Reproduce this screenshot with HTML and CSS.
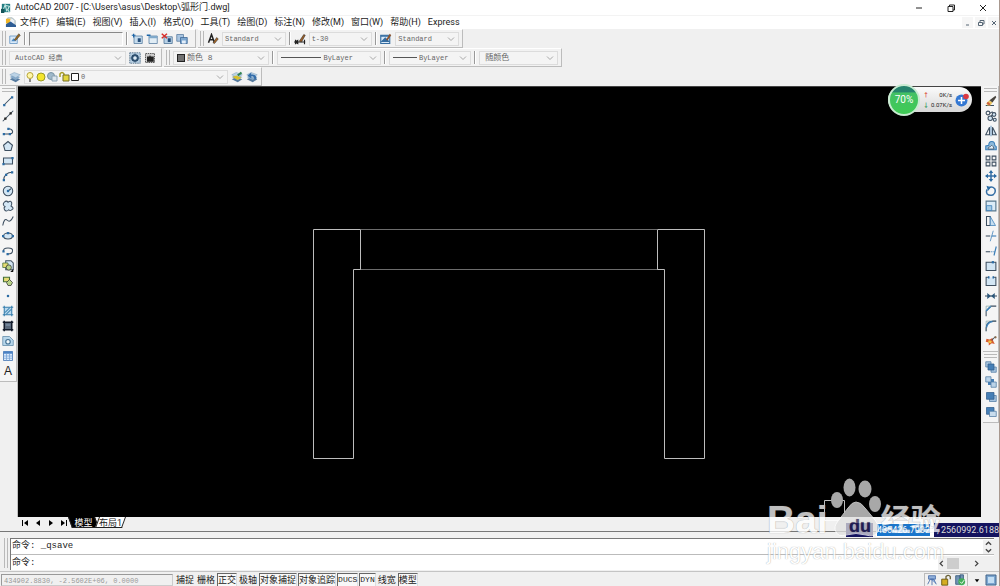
FILE: index.html
```html
<!DOCTYPE html>
<html lang="zh-CN">
<head>
<meta charset="utf-8">
<title>AutoCAD 2007</title>
<link rel="stylesheet" href="styles.css">
</head>
<body>
<svg class="defs" aria-hidden="true">
  <symbol id="chev" viewBox="0 0 8 8"><path d="M1 2.5 4 5.5 7 2.5" fill="none" stroke="#a8a8a8"/></symbol>
  <symbol id="layers" viewBox="0 0 16 16"><path d="M1 11 7 8l8 3-6 4z" fill="#557a9e"/><path d="M1 8 7 5l8 3-6 4z" fill="#86a9c9"/><path d="M1 5 7 2l8 3-6 4z" fill="#bcd3e6" stroke="#7697b5" stroke-width=".6"/></symbol>
</svg>
<div class="app">
  <header class="titlebar">
    <svg class="logo" viewBox="0 0 12 12"><path d="M1 1h10v10H1z" fill="#247e83"/><path d="M2 10 5 2l2 8M6 3l4 1-2 4 2 3" fill="none" stroke="#c8e9e4" stroke-width="1.3"/><path d="M0 7h4v5H0z" fill="#175659"/></svg>
    <h1 class="title">AutoCAD 2007 - [C:\Users\asus\Desktop\弧形门.dwg]</h1>
    <div class="wincontrols">
      <button aria-label="最小化"><svg viewBox="0 0 10 10"><path d="M2 5h6" /></svg></button>
      <button aria-label="还原"><svg viewBox="0 0 10 10"><path d="M2 3.5h5v5H2zM3.5 3.500V2H8.500v5H7"/></svg></button>
      <button aria-label="关闭"><svg viewBox="0 0 10 10"><path d="M2 2l6 6M8 2l-6 6"/></svg></button>
    </div>
  </header>
  <nav class="menubar">
    <svg class="docicon" viewBox="0 0 12 12"><path d="M3 1h5l3 3v6H3z" fill="#e9eff6" stroke="#9aa"/><path d="M1 2h5l-1 5H1z" fill="#f0b526"/><path d="M1 8l5-3 6 4v2H1z" fill="#2e5d95"/></svg>
    <button>文件(F)</button><button>编辑(E)</button><button>视图(V)</button><button>插入(I)</button><button>格式(O)</button><button>工具(T)</button><button>绘图(D)</button><button>标注(N)</button><button>修改(M)</button><button>窗口(W)</button><button>帮助(H)</button><button>Express</button>
    <div class="doccontrols">
      <button aria-label="最小化文档"><svg viewBox="0 0 8 8"><path d="M2 6h3"/></svg></button>
      <button aria-label="还原文档"><svg viewBox="0 0 8 8"><path d="M3 3V1.500h4V5H5.500M1.500 3.500h4v3h-4z"/></svg></button>
      <button aria-label="关闭文档"><svg viewBox="0 0 8 8"><path d="M2 2l4 4M6 2 2 6"/></svg></button>
    </div>
  </nav>
  <div class="row">
    <div class="bar barstd">
      <i class="grip"></i>
      <button class="tool" aria-label="编辑块"><svg viewBox="0 0 16 16"><path d="M1 4h10v10H1z" fill="#d9e9f8" stroke="#5a8dbd"/><path d="M3 11 6 7l3 4z" fill="#4c8bc4"/><path d="m7 9 6-8 2 2-6 7z" fill="#9a6a20" stroke="#333" stroke-width=".7"/></svg></button>
      <i class="sep"></i>
      <input class="blockname" type="text" aria-label="参照名称">
      <i class="sep"></i>
      <button class="tool" aria-label="添加到工作集"><svg viewBox="0 0 16 16"><path d="M4 4h11v10H4z" fill="#c6dced" stroke="#51789d"/><path d="M9 7h4v5H9z" fill="#264f7b"/><path d="M1 3h5M3.500 1v5" stroke="#1b64a6" stroke-width="1.600"/></svg></button>
      <button class="tool" aria-label="从工作集删除"><svg viewBox="0 0 16 16"><path d="M4 4h11v10H4z" fill="#e1edf5" stroke="#51789d"/><path d="M4 4h11v3H4z" fill="#80a9ca"/><path d="M1 3h5" stroke="#1b64a6" stroke-width="2"/></svg></button>
      <button class="tool" aria-label="放弃修改"><svg viewBox="0 0 16 16"><path d="M4 5h11v9H4z" fill="#b8d1e6" stroke="#456d93"/><path d="M9 7h4v5H9z" fill="#264f7b"/><path d="m1 1 7 6M8 1 1 7" stroke="#d92d28" stroke-width="2"/></svg></button>
      <button class="tool" aria-label="保存修改"><svg viewBox="0 0 16 16"><path d="M1 2h9v9H1z" fill="#a9c5e1" stroke="#55799d"/><path d="M6 6h9v8H6z" fill="#7da7d0" stroke="#386493"/><path d="M8 10h5v4H8z" fill="#e3eefa"/></svg></button>
    </div>
    <div class="bar barstyle">
      <i class="grip"></i>
      <button class="tool" aria-label="文字样式"><svg viewBox="0 0 16 16"><path d="m2 13 4-11 4 11M3 9h6" fill="none" stroke="#222" stroke-width="2"/><path d="m8 13 5-7 2 2-5 6z" fill="#ab6b2a" stroke="#222" stroke-width=".7"/></svg></button>
      <label class="combo grow"><select aria-label="文字样式"><option>Standard</option></select><svg><use href="#chev"/></svg></label>
      <i class="sep"></i>
      <button class="tool" aria-label="标注样式"><svg viewBox="0 0 16 16"><path d="M1 12h14M2 9v6M14 9v6M1 12l4-2v4z" stroke="#222" stroke-width="1.500"/><path d="m7 11 6-9 2 1-5 9z" fill="#9b5e27" stroke="#222" stroke-width=".7"/></svg></button>
      <label class="combo grow"><select aria-label="标注样式"><option>t-30</option></select><svg><use href="#chev"/></svg></label>
      <i class="sep"></i>
      <button class="tool" aria-label="表格样式"><svg viewBox="0 0 16 16"><path d="M1 3h12v11H1z" fill="#d9e9f8" stroke="#356da1" stroke-width="1.500"/><path d="M1 4h12M3 11l4-4 4 4z" stroke="#356da1" stroke-width="2" fill="#356da1"/><path d="m8 9 5-8 2 2-5 7z" fill="#8d532c"/></svg></button>
      <label class="combo grow"><select aria-label="表格样式"><option>Standard</option></select><svg><use href="#chev"/></svg></label>
    </div>
  </div>
  <div class="row">
    <div class="bar barws">
      <i class="grip"></i>
      <label class="combo grow"><select aria-label="工作空间"><option>AutoCAD 经典</option></select><svg><use href="#chev"/></svg></label>
      <button class="tool" aria-label="工作空间设置"><svg viewBox="0 0 16 16"><path d="M1 1h14v14H1z" fill="#b8cfe2" stroke="#42617b" stroke-dasharray="2 1"/><circle cx="8" cy="8" r="4" fill="none" stroke="#294b6b" stroke-width="2"/><path d="M8 2v12M2 8h12M4 4l8 8M12 4l-8 8" stroke="#294b6b"/><circle cx="8" cy="8" r="2" fill="#dce9f2"/></svg></button>
      <button class="tool" aria-label="我的工作空间"><svg viewBox="0 0 16 16"><path d="M2 2h12v12H2z" fill="#ccc" stroke="#333" stroke-dasharray="2 1"/><path d="M4 6h3l1-2 1 2h4v7H4z" fill="#222"/></svg></button>
    </div>
    <div class="bar barprops">
      <i class="grip"></i>
      <label class="combo w100"><i class="swatch"></i><select aria-label="颜色"><option>颜色 8</option></select><svg><use href="#chev"/></svg></label>
      <i class="sep"></i>
      <label class="combo w108"><i class="sample long"></i><select aria-label="线型"><option>ByLayer</option></select><svg><use href="#chev"/></svg></label>
      <i class="sep"></i>
      <label class="combo w84"><i class="sample"></i><select aria-label="线宽"><option>ByLayer</option></select><svg><use href="#chev"/></svg></label>
      <i class="sep"></i>
      <label class="combo w80"><select aria-label="打印样式"><option>随颜色</option></select><svg><use href="#chev"/></svg></label>
    </div>
  </div>
  <div class="row">
    <div class="bar barlayer">
      <i class="grip"></i>
      <button class="tool" aria-label="图层特性管理器"><svg><use href="#layers"/></svg></button>
      <label class="combo grow layercombo">
        <svg class="state" viewBox="0 0 54 12"><circle cx="5" cy="4.500" r="3" fill="#fff6a8" stroke="#b7a437"/><path d="M4 8h2v3H4z" fill="#888"/><circle cx="16" cy="6" r="4" fill="#f4e52d" stroke="#9a9a26"/><circle cx="26" cy="5" r="3.500" fill="#9fb9cb" stroke="#7893a5"/><path d="M27 5h5v5h-5z" fill="#dbe6ee" stroke="#8ba2b3"/><path d="M35 6V3q2-3 4 0v3" fill="none" stroke="#a89d28" stroke-width="1.500"/><path d="M38 4h6v6h-6z" fill="#e3d63c" stroke="#766e24"/><path d="M46.500 2.500h7v7h-7z" fill="#fff" stroke="#222"/></svg>
        <select aria-label="图层"><option>0</option></select><svg><use href="#chev"/></svg></label>
      <button class="tool" aria-label="置为当前图层"><svg viewBox="0 0 16 16"><use href="#layers"/><path d="M2 8l5-2 7 3-5 3z" fill="#d8c12c"/><path d="m8 5 5-4 2 2-5 4z" fill="#338352"/></svg></button>
      <button class="tool" aria-label="上一个图层"><svg viewBox="0 0 16 16"><use href="#layers"/><path d="M14 11c0-5-3-7-7-6V2L2 6l5 4V7q4-1 4 4z" fill="#356eaa"/></svg></button>
    </div>
  </div>
  <main class="work">
    <aside class="side left">
      <div class="palette">
      <i class="hgrip"></i>
      <button aria-label="直线"><svg viewBox="0 0 16 16"><path d="M3 13 13 3" class="k"/><path d="M1.500 12h3v3h-3zM12 1.500h3v3h-3z" class="b"/></svg></button>
      <button aria-label="构造线"><svg viewBox="0 0 16 16"><path d="M1 15 15 1" class="k"/><path d="M3 10h3v3H3zM10 3h3v3h-3z" fill="#222"/></svg></button>
      <button aria-label="多段线"><svg viewBox="0 0 16 16"><path d="M2 12h9q4-1 3-4-1-3-5-3" class="k"/><path d="M1 10.500h3v3H1zM9 10.500h3v3H9zM7 3.500h3v3H7z" class="b"/></svg></button>
      <button aria-label="正多边形"><svg viewBox="0 0 16 16"><path d="M8 2l6 5-2 7H4L2 7z" class="k f"/></svg></button>
      <button aria-label="矩形"><svg viewBox="0 0 16 16"><path d="M2 4h12v8H2z" class="k f"/><path d="M.5 10.500h3v3h-3zM12.500 2.500h3v3h-3z" class="b"/></svg></button>
      <button aria-label="圆弧"><svg viewBox="0 0 16 16"><path d="M2 14Q3 3 14 3" class="k"/><path d="M1 12h3v3H1zM4 5h3v3H4zM12 1.500h3v3h-3z" class="b"/></svg></button>
      <button aria-label="圆"><svg viewBox="0 0 16 16"><circle cx="8" cy="8" r="6.300" class="k f"/><path d="M8 8l4-3" class="k"/><path d="M6.500 6.500h3v3h-3z" class="b"/></svg></button>
      <button aria-label="修订云线"><svg viewBox="0 0 16 16"><path d="M4 9Q0 6 3 3q3-3 5 0 4-3 5 1 0 3-1 4 5 3 1 5-2 2-4 0-4 4-6-1-1-2 1-3z" class="k f"/></svg></button>
      <button aria-label="样条曲线"><svg viewBox="0 0 16 16"><path d="M1 14Q3 3 7 7t8-5" class="k"/></svg></button>
      <button aria-label="椭圆"><svg viewBox="0 0 16 16"><ellipse cx="8" cy="8" rx="6" ry="4" class="k f"/><path d="M0 6.500h3v3H0zM13 6.500h3v3h-3zM6.500 2.500h3v3h-3z" class="b"/></svg></button>
      <button aria-label="椭圆弧"><svg viewBox="0 0 16 16"><path d="M2 9Q1 4 8 4t6 4q0 4-6 4" class="k"/><path d="M.5 7h3v3h-3zM6 10.500h3v3H6z" class="b"/></svg></button>
      <button aria-label="插入块"><svg viewBox="0 0 16 16"><path d="M5 1h7l3 3v9H5z" class="k f"/><path d="M1 4h7v6H1z" fill="#e6dc74" stroke="#456f37"/><circle cx="9" cy="10" r="3.500" fill="#b8d388" stroke="#333"/><path d="M15 12v4h-4z" fill="#111"/></svg></button>
      <button aria-label="创建块"><svg viewBox="0 0 16 16"><path d="M2 3h8v6H2z" fill="#e6dc74" stroke="#456f37" stroke-width="1.500"/><path d="M10 6l4 4-2 4H8l-2-4z" fill="#b8d388" stroke="#333"/></svg></button>
      <button aria-label="点"><svg viewBox="0 0 16 16"><path d="M6.500 6.500h3v3h-3z" class="b"/></svg></button>
      <button aria-label="图案填充"><svg viewBox="0 0 16 16"><path d="M3 3h10v10H3z" fill="#b9d9ee"/><path d="M3 1v14M13 1v14M1 3h14M1 13h14M4 10l6-6M6 12l6-6" stroke="#347dac" stroke-width="1.400"/></svg></button>
      <button aria-label="渐变色"><svg viewBox="0 0 16 16"><path d="M3 3h10v10H3z" fill="#59687b"/><path d="M3 1v14M13 1v14M1 3h14M1 13h14" stroke="#121b2b" stroke-width="2"/><path d="M5 5h6v3H5z" fill="#71849a"/></svg></button>
      <button aria-label="面域"><svg viewBox="0 0 16 16"><path d="M1 2h9l5 5v7H1z" fill="#b7d6ea" stroke="#5c87a5"/><circle cx="8" cy="9" r="3" fill="#eef6fa" stroke="#416f92" stroke-width="1.500"/></svg></button>
      <button aria-label="表格"><svg viewBox="0 0 16 16"><path d="M2 2h12v12H2z" fill="#d9eafd" stroke="#386bac"/><path d="M2 2h12v3H2z" fill="#4b82c4"/><path d="M6 5v9M10 5v9M2 8h12M2 11h12" stroke="#76a2d4"/></svg></button>
      <button class="letter">A</button>
      </div>
    </aside>
    <section class="drawing" aria-label="绘图区">
      <svg viewBox="18 87 963 430" preserveAspectRatio="xMidYMin slice">
        <path d="M361 229.500H657M354 269.500H664" stroke="#6c6c6c" fill="none"/>
        <path d="M313.500 229.500H360.500V269.500H353.500V458.500H313.500zM657.500 229.500H704.500V458.500H664.500V269.500H657.500z" stroke="#bdbdbd" fill="none"/>
      </svg>
      <div class="netball">
        <span class="percent">70%</span>
        <span class="rates"><span><b class="up">↑</b>0K/s</span><span><b class="down">↓</b>0.07K/s</span></span>
        <svg class="plus" viewBox="0 0 14 14"><circle cx="6.500" cy="7.500" r="6" fill="#3478d3"/><path d="M6.500 4v7M3 7.500h7" stroke="#fff" stroke-width="1.500"/><circle cx="11" cy="3.500" r="2.800" fill="#dc3941"/></svg>
      </div>
    </section>
    <aside class="side right">
      <div class="palette">
      <i class="hgrip"></i>
      <button aria-label="删除"><svg viewBox="0 0 16 16"><path d="M1 14h11" class="k"/><path d="m2 11 4-4 4 3-3 4H3z" fill="#e8c35e"/><path d="m6 7 8-6 1 2-5 7z" fill="#48443e"/><path d="M2 11l2-2 3 3-1 2z" fill="#c7583e"/></svg></button>
      <button aria-label="复制"><svg viewBox="0 0 16 16"><circle cx="4" cy="4" r="2.500" class="k"/><path d="M6 5q5-5 5 1L7 9" class="k"/><circle cx="12" cy="6" r="2.500" class="k f"/><circle cx="7" cy="11" r="3" class="k f"/><circle cx="13" cy="13" r="2" class="k f"/></svg></button>
      <button aria-label="镜像"><svg viewBox="0 0 16 16"><path d="M6 3v10H1z" class="k"/><path d="M10 3v10h5z" class="k f"/><path d="M8 1v14" stroke="#3474ac"/></svg></button>
      <button aria-label="偏移"><svg viewBox="0 0 16 16"><path d="M1 13V8l4-1q0-5 4-5t4 5l2 2v4z" fill="#8db8d9" stroke="#397eb8" stroke-width="1.400"/><path d="M4 12q0-3 3-3 2-4 4 0l1 3z" fill="#e5f1fb" stroke="#3e4f60"/></svg></button>
      <button aria-label="阵列"><svg viewBox="0 0 16 16"><path d="M1.500 1.500h5v5h-5zM9.500 1.500h5v5h-5zM1.500 9.500h5v5h-5zM9.500 9.500h5v5h-5z" class="k"/></svg></button>
      <button aria-label="移动"><svg viewBox="0 0 16 16"><path d="M8 2v12M2 8h12" stroke="#366fa5" stroke-width="2"/><path d="M8 0l3 4H5zM8 16l3-4H5zM0 8l4-3v6zM16 8l-4-3v6z" class="b"/></svg></button>
      <button aria-label="旋转"><svg viewBox="0 0 16 16"><path d="M5 4q4-3 8 1 2 5-2 8-5 2-8-1-2-3 0-6" fill="none" stroke="#366fa5" stroke-width="2"/><path d="M2 1l6 2-4 5z" class="b"/></svg></button>
      <button aria-label="缩放"><svg viewBox="0 0 16 16"><path d="M1.500 1.500h13v13h-13z" fill="#dcecf8" stroke="#58788e" stroke-width="1.500"/><path d="M2 7.500h7V14H2z" fill="#a6cce6" stroke="#397eb8"/></svg></button>
      <button aria-label="拉伸"><svg viewBox="0 0 16 16"><path d="M2 2h5v12H2z" class="k"/><path d="M7 2l7 12H7z" fill="#c6def0" stroke="#397eb8"/></svg></button>
      <button aria-label="修剪"><svg viewBox="0 0 16 16"><path d="M7 15 11 1" stroke="#397eb8"/><path d="M1 8h6" class="k"/><path d="M9 8h6" stroke="#397eb8" stroke-width="1.500"/></svg></button>
      <button aria-label="延伸"><svg viewBox="0 0 16 16"><path d="M12 14 15 2" stroke="#397eb8" stroke-width="1.500"/><path d="M1 9h6" class="k"/><path d="M8 9h5" stroke="#397eb8" stroke-dasharray="2 1"/></svg></button>
      <button aria-label="打断于点"><svg viewBox="0 0 16 16"><path d="M1.500 3h13v11h-13z" class="k f"/><path d="M9 1.500h3v3H9z" class="b"/></svg></button>
      <button aria-label="打断"><svg viewBox="0 0 16 16"><path d="M5 3H1.500v11h13V3H11" class="k f"/><path d="M4 1.500h2v3H4zM10 1.500h2v3h-2z" class="b"/></svg></button>
      <button aria-label="合并"><svg viewBox="0 0 16 16"><path d="M0 8h16" class="k"/><path d="m3 4 5 4-5 4zM13 4 8 8l5 4z" fill="#2b567a"/></svg></button>
      <button aria-label="倒角"><svg viewBox="0 0 16 16"><path d="M1.500 15V8L8 1.500h7" class="k"/><path d="M1.500 8 8 1.500" stroke="#397eb8" stroke-width="2"/><path d="M1.500 7V1.500H8" stroke="#8aa" fill="none"/></svg></button>
      <button aria-label="圆角"><svg viewBox="0 0 16 16"><path d="M1.500 15V1.500H15" stroke="#8aa" fill="none"/><path d="M1.500 15v-4Q2 2 11 1.500h4" class="k"/><path d="M2 10Q3 3 10 2" stroke="#397eb8" stroke-width="2" fill="none"/></svg></button>
      <button aria-label="分解"><svg viewBox="0 0 16 16"><path d="m2 5 4 1 4-2 1 4 2 4-4-1-4 3v-4L1 9z" fill="#d65c31"/><path d="m5 7 4 1-1 3-4-1z" fill="#f1c447"/><path d="m9 7 5-5" class="k"/><circle cx="14" cy="3" r="1.500" fill="#8c6c49"/></svg></button>
      </div>
      <div class="palette">
      <i class="hgrip"></i>
      <button aria-label="前置"><svg viewBox="0 0 16 16"><path d="M1 1h7v7H1zM8 8h7v7H8z" fill="#a9c5df" stroke="#527ba3"/><path d="M4 4h8v8H4z" fill="#467fb6" stroke="#315e8c"/></svg></button>
      <button aria-label="后置"><svg viewBox="0 0 16 16"><path d="M4 4h8v8H4z" fill="#467fb6"/><path d="M1 1h7v7H1zM8 8h7v7H8z" fill="#bbd3e8" stroke="#527ba3"/></svg></button>
      <button aria-label="置于对象之上"><svg viewBox="0 0 16 16"><path d="M6 6h9v8H6z" fill="#a9c5df" stroke="#527ba3"/><path d="M2 2h10v9H2z" fill="#467fb6" stroke="#315e8c"/></svg></button>
      <button aria-label="置于对象之下"><svg viewBox="0 0 16 16"><path d="M2 2h10v9H2z" fill="#467fb6" stroke="#315e8c"/><path d="M6 7h9v7H6z" fill="#c8dced" stroke="#527ba3"/></svg></button>
      </div>
    </aside>
  </main>
  <div class="tabs">
    <button aria-label="第一个"><svg viewBox="0 0 8 8"><path d="M1 1h1v6H1zM7 1v6L3 4z"/></svg></button>
    <button aria-label="上一个"><svg viewBox="0 0 8 8"><path d="M6 1v6L2 4z"/></svg></button>
    <button aria-label="下一个"><svg viewBox="0 0 8 8"><path d="M2 1v6l4-3z"/></svg></button>
    <button aria-label="最后一个"><svg viewBox="0 0 8 8"><path d="M6 1h1v6H6zM1 1v6l4-3z"/></svg></button>
    <button class="tab active">模型</button><button class="tab">布局1</button>
  </div>
  <section class="command">
    <i class="grip"></i>
    <div class="console">
      <div class="line history"><span>命令: _qsave</span><span class="vscroll"><button aria-label="向上"><svg viewBox="0 0 8 8"><path d="M1 5.500 4 2.500 7 5.500"/></svg></button><button aria-label="向下"><svg viewBox="0 0 8 8"><path d="M1 2.500 4 5.500 7 2.500"/></svg></button></span></div>
      <div class="line"><label for="cmd">命令:</label><input id="cmd" type="text"><span class="hscroll"><button aria-label="向左"><svg viewBox="0 0 8 8"><path d="M5.500 1 2.500 4l3 3"/></svg></button><i class="thumb"></i><button aria-label="向右"><svg viewBox="0 0 8 8"><path d="M2.500 1l3 3-3 3"/></svg></button></span></div>
    </div>
  </section>
  <footer class="status">
    <output class="coords">434902.8830, -2.5602E+06, 0.0000</output>
    <div class="toggles"><button>捕捉</button><button>栅格</button><button class="on">正交</button><button>极轴</button><button class="on">对象捕捉</button><button class="on">对象追踪</button><button class="on mono">DUCS</button><button class="on mono">DYN</button><button>线宽</button><button class="on">模型</button></div>
    <div class="tray">
      <svg viewBox="0 0 14 14"><path d="M3 2h8v4H3zM5 6h4l3 6M7 6v7M2 12l3-6" fill="#91b0db" stroke="#496da8"/></svg>
      <svg viewBox="0 0 14 14"><path d="M7 7V3q3-3 5 0v3" fill="none" stroke="#696139" stroke-width="1.500"/><path d="M2 6h7v7H2z" fill="#d5ad22" stroke="#65500b"/></svg>
      <svg viewBox="0 0 14 14"><path d="M2 2h5v10H2zM7 1h4v7H7z" fill="#7394b4" stroke="#385b7e"/><circle cx="9" cy="9" r="4" fill="#42ae58"/><path d="m7 9 2 2 3-4" stroke="#fff" fill="none"/></svg>
    </div>
    <button class="more" aria-label="状态行菜单"><svg viewBox="0 0 8 8"><path d="M1 3h6L4 7z"/></svg></button>
    <button class="clean" aria-label="全屏显示"><svg viewBox="0 0 12 12"><path d="M1 1h10v10H1z" fill="#7ca7d1" stroke="#42658a"/><path d="M3 3h6v6H3z" fill="#c3def4"/></svg></button>
  </footer>
  <div class="dynamic"><span class="dyn prompt"></span><span class="dyn xval"><mark>435426.7932</mark></span><span class="dyn yval">, 2560992.6188</span></div>
  <div class="watermark">
    <div class="brand"><span>Bai</span>
      <svg viewBox="0 0 54 60"><path d="M1.500 22.500h20v20h-20z" fill="none" stroke="#fff"/><g fill="#e0e0e0"><ellipse cx="14" cy="22" rx="6" ry="8"/><ellipse cx="26.500" cy="9.500" rx="6" ry="9"/><ellipse cx="42" cy="11" rx="6.500" ry="8.500"/><ellipse cx="52" cy="26" rx="6" ry="8"/><path d="M33 24q5 0 9 6l10 12q7 9 1 14-3 3-10 1-10-3-20 0-8 2-10-3-3-5 2-11l10-13q4-6 8-6z" stroke="#fff"/></g><text x="26" y="54" class="du">du</text></svg>
      <span class="cn">经验</span></div>
    <div class="site">jingyan.baidu.com</div>
  </div>
</div>
</body>
</html>
```
FILE: styles.css
```css
* { box-sizing: border-box; }
body { margin: 0; background: #f0f0f0; color: #222; font-family: Roboto, "Noto Sans CJK SC", sans-serif; font-size: 9px; }
button { background: none; border: 0; padding: 0; margin: 0; font: inherit; color: inherit; line-height: 1; }
button svg { display: block; }
select, input { font: inherit; color: inherit; background: none; border: 0; padding: 0; margin: 0; outline: 0; min-width: 0; border-radius: 0; }
.defs { position: absolute; width: 0; height: 0; }
.app { position: relative; display: flex; flex-direction: column; height: 100vh; overflow: hidden; border-right: 1px solid #a8988f; }
.titlebar { display: flex; align-items: center; height: 15px; flex: none; background: #fff; padding-left: 1px; }
.logo { width: 10px; height: 10px; margin-right: 4px; }
.title { margin: 0; font-size: 9px; font-weight: 400; line-height: 15px; flex: 1; white-space: nowrap; }
.wincontrols { display: flex; gap: 12px; padding-right: 6px; }
.wincontrols svg { width: 10px; height: 10px; fill: none; stroke: #222; }
.wincontrols button { width: 20px; display: grid; place-items: center; }
.menubar { display: flex; align-items: center; gap: 7px; height: 14px; flex: none; background: #fff; padding-left: 5px; border-top: 1px solid #f3f3f3; white-space: nowrap; font-size: 9px; }
.docicon { width: 11px; height: 11px; margin-right: -3px; }
.doccontrols { display: flex; margin-left: auto; gap: 2px; }
.doccontrols button { width: 11px; height: 11px; background: #f6f6f6; display: grid; place-items: center; }
.doccontrols svg { width: 8px; height: 8px; fill: none; stroke: #566675; }
.row { display: flex; height: 19px; flex: none; gap: 2px; font-family: "Liberation Mono", "Noto Sans CJK SC", monospace; font-size: 7px; color: #666; }
.bar { display: flex; align-items: center; gap: 3px; padding: 0 3px 0 2px; border: 1px solid #fff; border-right-color: #bcbcbc; border-bottom-color: #bcbcbc; border-left: 0; background: #f2f2f2; }
.barstd { width: 196px; padding-right: 7px; }
.barstyle { width: 265px; }
.barws { width: 162px; padding-right: 5px; }
.barprops { width: 398px; }
.barlayer { width: 262px; }
.grip { width: 4px; height: 15px; flex: none; border-left: 1px solid #b9b9b9; border-right: 1px solid #b9b9b9; }
.sep { width: 2px; height: 13px; flex: none; border-left: 1px solid #999; border-right: 1px solid #fff; }
.tool { width: 12px; height: 12px; flex: none; }
.tool svg { width: 12px; height: 12px; }
.blockname { flex: 1; height: 14px; border: 1px solid #fff; border-top-color: #888; border-left-color: #888; background: #f0f0f0; }
.combo { display: flex; align-items: center; height: 14px; border: 1px solid #dcdcdc; background: #f4f4f4; padding: 0 3px; }
.barstyle .combo { padding-left: 0; }
.combo select { appearance: none; flex: 1; height: 12px; padding-left: 2px; opacity: 1; }
.combo > svg { width: 8px; height: 8px; flex: none; pointer-events: none; }
.combo > svg.state { width: 54px; height: 12px; }
.layercombo { padding-left: 0; }
.grow { flex: 1; }
.w80 { flex: 80; }
.w84 { flex: 84; }
.w100 { flex: 100; }
.w108 { flex: 108; }
.barprops select { width: 20px; }
.barprops .combo { font-size: 8px; }
.barprops .combo:has(.sample) { font-size: 7px; }
.swatch { width: 8px; height: 8px; background: #707070; border: 1px solid #222; }
.sample { width: 24px; height: 1px; background: #555; }
.sample.long { width: 40px; }
.work { display: flex; flex: 1; min-height: 0; }
.side { width: 18px; flex: none; }
.left { border-right: 1px solid #c0c0c0; }
.palette { display: flex; flex-direction: column; align-items: center; width: 17px; padding: 2px 0 3px; background: #f5f5f5; border: 1px solid #bcbcbc; border-width: 0 1px 1px 0; }
.right .palette { margin-left: 2px; width: 16px; }
.hgrip { width: 13px; height: 4px; margin-bottom: 1px; border-top: 1px solid #b9b9b9; border-bottom: 1px solid #b9b9b9; }
.palette button { width: 15px; height: 15px; display: grid; place-items: center; }
.palette svg { width: 12px; height: 12px; }
.k { fill: none; stroke: #3e4f60; stroke-width: 1.4; }
.b { fill: #2b6ba3; }
.f { fill: #d3e6f4; }
.palette .letter { font-family: "Liberation Sans", sans-serif; font-size: 12px; }
.drawing { position: relative; flex: 1; min-width: 0; background: #000; border-top: 1px solid #444; }
.drawing > svg { display: block; width: 100%; height: 100%; }
.netball { position: absolute; top: 0; right: 9px; display: flex; align-items: center; width: 84px; height: 25px; padding-right: 3px; border-radius: 13px; background: linear-gradient(#fafafa, #d8d8d8); }
.percent { display: grid; place-items: center; width: 32px; height: 32px; flex: none; border: 2px solid #c8ebd1; border-radius: 50%; background: linear-gradient(#26836d 22%, #43c165 24%, #3fcb55); color: #fff; font-size: 10px; }
.rates { flex: 1; font-size: 6px; line-height: 10px; padding: 0 3px; }
.rates > span { display: flex; justify-content: space-between; }
.up { color: #db4c40; }
.down { color: #31975c; }
.plus { width: 14px; height: 14px; }
.tabs { display: flex; align-items: center; height: 11px; flex: none; margin-left: 18px; }
.tabs button { width: 13px; flex: none; }
.tabs svg { width: 8px; height: 8px; margin: auto; }
.tabs .tab { position: relative; z-index: 0; height: 11px; width: 27px; font-size: 9px; line-height: 10px; }
.tabs .tab::before { content: ""; position: absolute; z-index: -1; inset: 0; background: #fff; border: 1px solid #222; border-top: 0; transform: skewX(-20deg); }
.tabs .active { color: #fff; }
.tabs .active::before { background: #000; transform: skewX(20deg); }
.command { display: flex; flex: none; gap: 2px; height: 41px; margin-top: 3px; padding: 6px 5px 1px 4px; border-top: 1px solid #777; border-bottom: 1px solid #c4c4c4; }
.command .grip { height: 30px; }
.console { flex: 1; border: 1px solid #777; border-width: 1px 0 0 1px; background: #fff; font-family: "Liberation Mono", "Noto Sans CJK SC", monospace; font-size: 9px; }
.line { display: flex; align-items: center; height: 16px; padding-left: 1px; line-height: 15px; }
.history { justify-content: space-between; border-bottom: 1px solid #bbb; }
.line input { flex: 1; }
.vscroll { width: 11px; display: flex; flex-direction: column; background: #f0f0f0; }
.vscroll svg, .hscroll svg { width: 7px; height: 7px; margin: auto; fill: none; stroke: #444; stroke-width: 1.500; }
.hscroll { width: 56px; height: 14px; padding-right: 14px; display: flex; align-items: center; justify-content: space-between; background: #f0f0f0; }
.thumb { width: 12px; height: 11px; background: #cdcdcd; margin-right: 12px; }
.status { display: flex; align-items: center; flex: none; height: 14px; padding: 1px 2px 0 1px; }
.coords { width: 172px; height: 12px; border: 1px solid #ccc; border-top-color: #999; border-left-color: #999; padding-left: 2px; line-height: 12px; color: #999; font-family: "Liberation Mono", monospace; font-size: 7px; white-space: nowrap; }
.toggles { display: flex; gap: 1px; margin-left: 2px; }
.toggles button { height: 13px; border: 1px solid #f0f0f0; border-bottom: 0; white-space: nowrap; font-size: 9px; line-height: 12px; }
.toggles .on { border-color: #666 #ddd #ddd #666; background: #f8f8f8; }
.toggles .mono { font-family: "Liberation Mono", monospace; font-size: 8px; }
.tray { display: flex; gap: 2px; margin-left: auto; margin-right: 4px; border: 1px solid #bbb; border-width: 1px 1px 0 1px; padding: 0 1px; }
.tray svg { width: 12px; height: 12px; }
.more svg { width: 6px; height: 8px; margin: 0 5px 0 2px; }
.clean svg { width: 12px; height: 12px; }
.dynamic { position: absolute; right: 0; bottom: 49px; display: flex; height: 14px; font-size: 9px; line-height: 14px; white-space: nowrap; }
.dyn { background: #14135f; color: #ddd; }
.prompt { width: 27px; margin-right: 3px; }
.xval { width: 58px; border: 1px solid #fff; background: #fff; line-height: 12px; }
.xval mark { display: inline-block; background: #1976cd; color: #fff; }
.yval { width: 65px; padding-left: 3px; }
.watermark { position: absolute; right: 54px; bottom: 20px; width: 178px; opacity: .75; color: #fff; pointer-events: none; font-family: "Liberation Sans", "Noto Sans CJK SC", sans-serif; text-shadow: 0 0 1px #777; }
.brand { display: flex; align-items: flex-end; height: 58px; }
.brand > span { font-size: 39px; font-weight: 700; line-height: 36px; color: #fff; }
.brand svg { width: 54px; height: 60px; flex: none; margin-left: -5px; overflow: visible; }
.brand > .cn { font-size: 30px; margin-left: 4px; white-space: nowrap; }
.du { font-size: 18px; font-weight: 700; fill: #25204f; }
.site { font-size: 22px; line-height: 28px; color: #fff; white-space: nowrap; }
```
